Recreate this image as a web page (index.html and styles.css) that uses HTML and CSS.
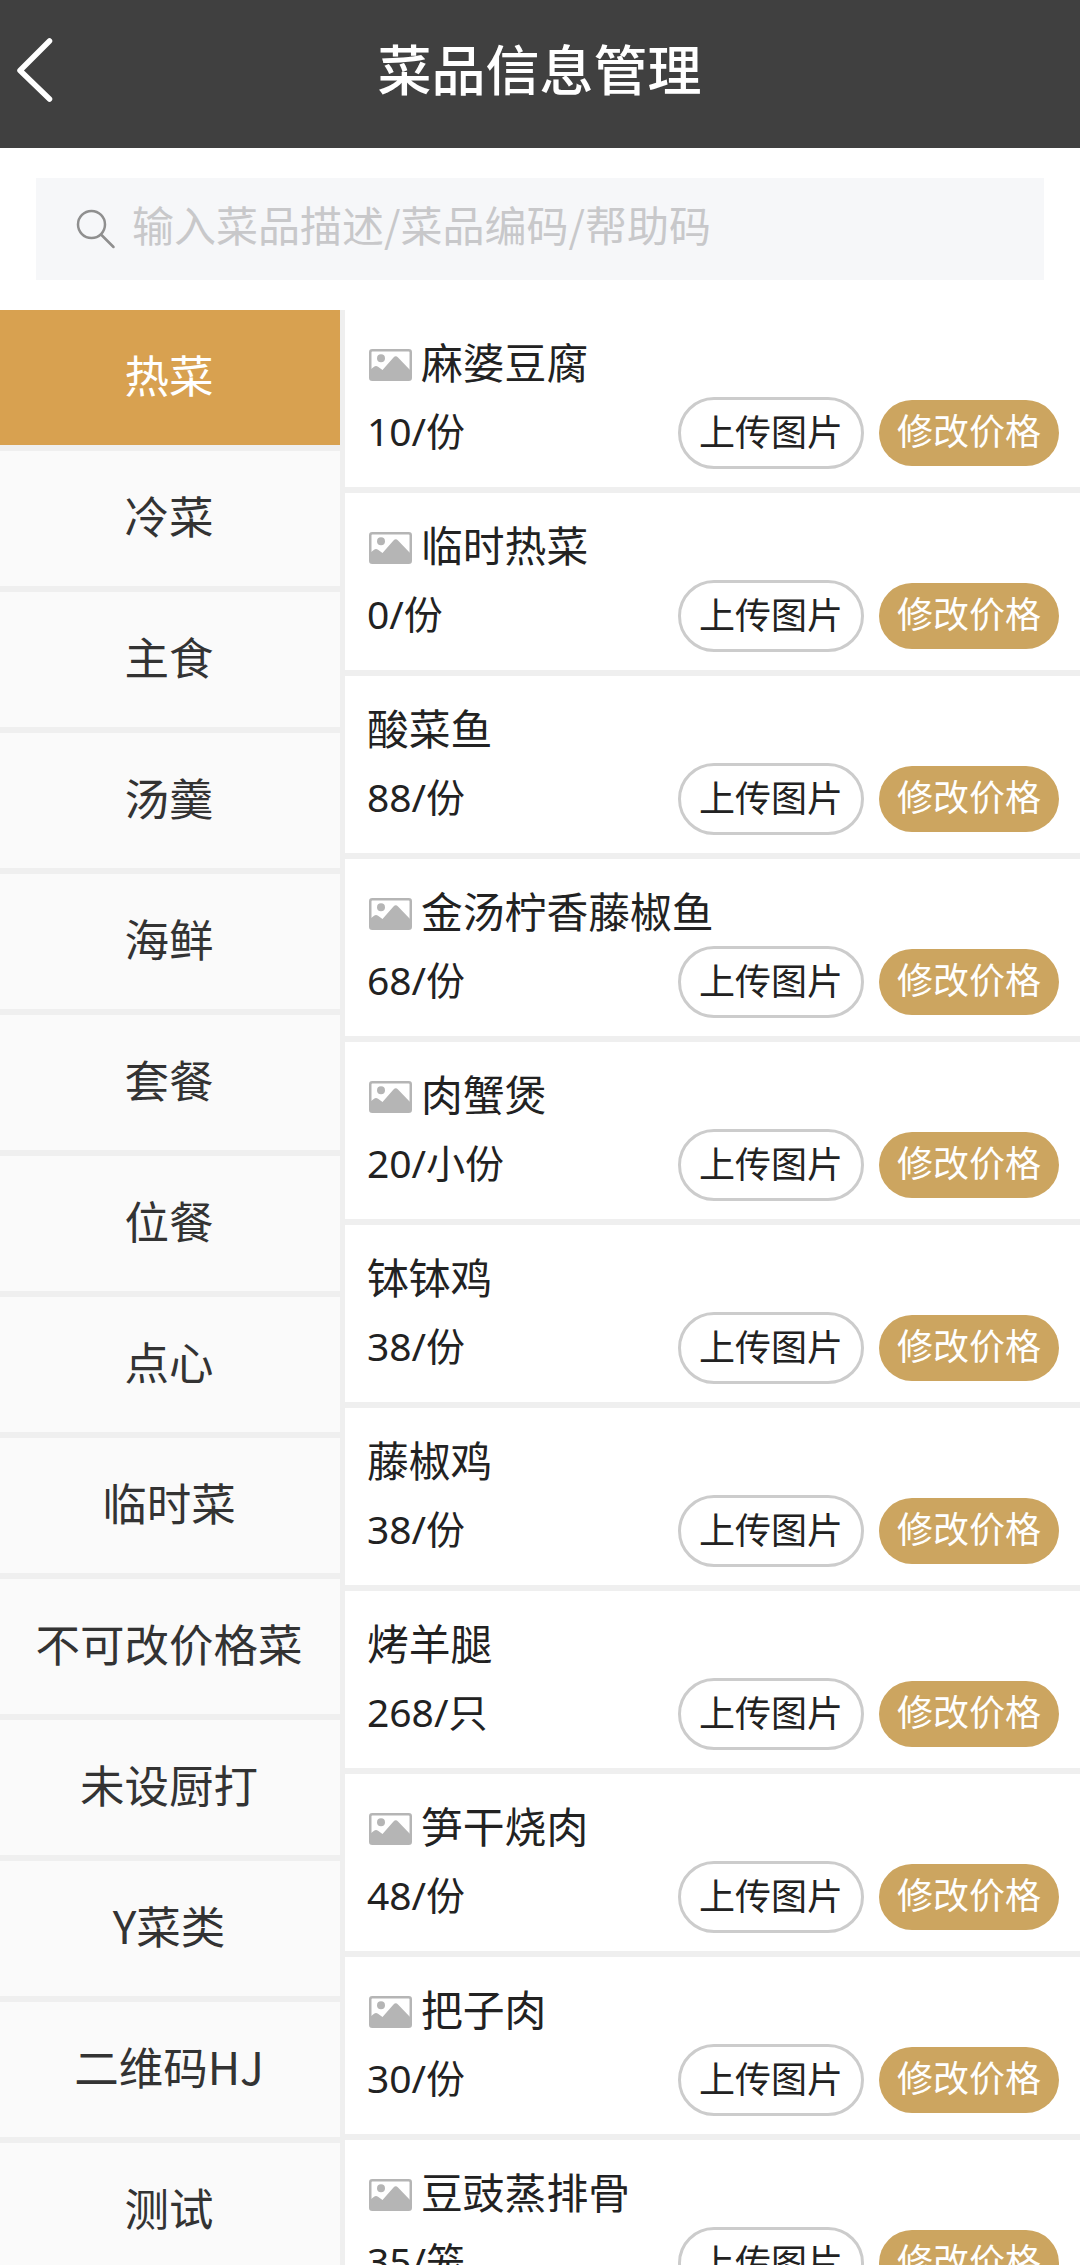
FILE: index.html
```html
<!DOCTYPE html>
<html lang="zh-CN">
<head>
    <meta charset="utf-8">
    <title>菜品信息管理</title>
    <link rel="stylesheet" href="styles.css">
</head>
<body>
    <svg width="0" height="0" class="defs">
        <symbol id="pic" viewBox="0 0 43 32">
            <rect x="1.250" y="1.250" width="40.500" height="29.500" rx="2" fill="#fff" stroke="#b5b5b5" stroke-width="2.500"/>
            <circle cx="12" cy="9.300" r="4" fill="#b5b5b5"/>
            <path d="M1 21 L5 17.800 Q7 16.300 9 17.800 L13.500 21 L24.500 8.500 Q26.800 6 29 8.500 L42 22 V31 H1 Z" fill="#b5b5b5"/>
        </symbol>
    </svg>

    <div class="header">
        <svg class="back" width="36" height="64" viewBox="0 0 36 64"><path d="M32.500 3 L3 32.500 L32.500 61" fill="none" stroke="#fff" stroke-width="5.500" stroke-linecap="round" stroke-linejoin="round"/></svg>
        <h1>菜品信息管理</h1>
    </div>

    <div class="search">
        <svg width="40" height="40" viewBox="0 0 40 40"><circle cx="15.500" cy="15.500" r="13.500" fill="none" stroke="#8f8f8f" stroke-width="2.500"/><path d="M25.500 26 L37.500 38" stroke="#8f8f8f" stroke-width="2.500" stroke-linecap="round"/></svg>
        <span>输入菜品描述/菜品编码/帮助码</span>
    </div>

    <div class="main">
        <ul class="menu">
            <li class="active">热菜</li>
            <li>冷菜</li>
            <li>主食</li>
            <li>汤羹</li>
            <li>海鲜</li>
            <li>套餐</li>
            <li>位餐</li>
            <li>点心</li>
            <li>临时菜</li>
            <li>不可改价格菜</li>
            <li>未设厨打</li>
            <li>Y菜类</li>
            <li>二维码HJ</li>
            <li>测试</li>
        </ul>
        <div class="list">
            <div class="dish">
                <div class="name"><svg class="pic"><use href="#pic"/></svg>麻婆豆腐</div>
                <div class="row"><span class="price">10/份</span><a class="btn upload">上传图片</a><a class="btn edit">修改价格</a></div>
            </div>
            <div class="dish">
                <div class="name"><svg class="pic"><use href="#pic"/></svg>临时热菜</div>
                <div class="row"><span class="price">0/份</span><a class="btn upload">上传图片</a><a class="btn edit">修改价格</a></div>
            </div>
            <div class="dish">
                <div class="name">酸菜鱼</div>
                <div class="row"><span class="price">88/份</span><a class="btn upload">上传图片</a><a class="btn edit">修改价格</a></div>
            </div>
            <div class="dish">
                <div class="name"><svg class="pic"><use href="#pic"/></svg>金汤柠香藤椒鱼</div>
                <div class="row"><span class="price">68/份</span><a class="btn upload">上传图片</a><a class="btn edit">修改价格</a></div>
            </div>
            <div class="dish">
                <div class="name"><svg class="pic"><use href="#pic"/></svg>肉蟹煲</div>
                <div class="row"><span class="price">20/小份</span><a class="btn upload">上传图片</a><a class="btn edit">修改价格</a></div>
            </div>
            <div class="dish">
                <div class="name">钵钵鸡</div>
                <div class="row"><span class="price">38/份</span><a class="btn upload">上传图片</a><a class="btn edit">修改价格</a></div>
            </div>
            <div class="dish">
                <div class="name">藤椒鸡</div>
                <div class="row"><span class="price">38/份</span><a class="btn upload">上传图片</a><a class="btn edit">修改价格</a></div>
            </div>
            <div class="dish">
                <div class="name">烤羊腿</div>
                <div class="row"><span class="price">268/只</span><a class="btn upload">上传图片</a><a class="btn edit">修改价格</a></div>
            </div>
            <div class="dish">
                <div class="name"><svg class="pic"><use href="#pic"/></svg>笋干烧肉</div>
                <div class="row"><span class="price">48/份</span><a class="btn upload">上传图片</a><a class="btn edit">修改价格</a></div>
            </div>
            <div class="dish">
                <div class="name"><svg class="pic"><use href="#pic"/></svg>把子肉</div>
                <div class="row"><span class="price">30/份</span><a class="btn upload">上传图片</a><a class="btn edit">修改价格</a></div>
            </div>
            <div class="dish">
                <div class="name"><svg class="pic"><use href="#pic"/></svg>豆豉蒸排骨</div>
                <div class="row"><span class="price">35/笼</span><a class="btn upload">上传图片</a><a class="btn edit">修改价格</a></div>
            </div>
        </div>
    </div>
</body>
</html>
```
FILE: styles.css
```css
* {
    box-sizing: border-box;
}

html, body {
    height: 2265px;
    overflow: hidden;
}

body {
    margin: 0;
    background: #fff;
    color: #222;
    font-family: "Noto Sans CJK SC", sans-serif;
}

.defs {
    display: block;
}

.header {
    display: flex;
    align-items: center;
    height: 148px;
    padding: 0 17px 9px;
    background: #404040;
    color: #fff;
}

.header h1 {
    flex: 1;
    margin: 0 37px 4px 0;
    font-size: 54px;
    font-weight: 500;
    line-height: 80px;
    text-align: center;
}

.search {
    display: flex;
    align-items: center;
    height: 102px;
    margin: 30px 36px;
    padding: 0 40px 10px;
    background: #f6f7f9;
    color: #c8c8ca;
    font-size: 42px;
    line-height: 60px;
}

.search svg {
    margin: 10px 16px 0 0;
}

.main {
    display: flex;
    height: 1955px;
    overflow: hidden;
}

.menu {
    width: 345px;
    margin: 0;
    padding: 0;
    list-style: none;
    background: #fafafa;
    border-right: 5px solid #efefef;
}

.menu li {
    height: 141px;
    padding-right: 2px;
    border-bottom: 6px solid #efefef;
    color: #333;
    font-size: 44.5px;
    line-height: 127px;
    text-align: center;
}

.menu .active {
    background: #d8a150;
    background-clip: padding-box;
    color: #fff;
}

.list {
    flex: 1;
}

.dish {
    height: 183px;
    padding: 21px 21px 0 22px;
    border-bottom: 6px solid #efefef;
}

.name {
    display: flex;
    align-items: center;
    height: 60px;
    font-size: 41.800px;
    line-height: 60px;
}

.pic {
    width: 43px;
    height: 32px;
    margin: 8px 9px 0 2px;
}

.row {
    display: flex;
    align-items: center;
    height: 84px;
}

.price {
    flex: 1;
    padding-bottom: 4px;
    font-family: "Noto Sans", "Noto Sans CJK SC", sans-serif;
    font-size: 39px;
    line-height: 60px;
}

.btn {
    border-radius: 36px;
    font-size: 36px;
    text-align: center;
}

.upload {
    width: 186px;
    height: 72px;
    border: 3px solid #ccc;
    line-height: 60px;
}

.edit {
    width: 180px;
    height: 66px;
    margin-left: 15px;
    background: #cca560;
    color: #fff;
    line-height: 59px;
}
```
